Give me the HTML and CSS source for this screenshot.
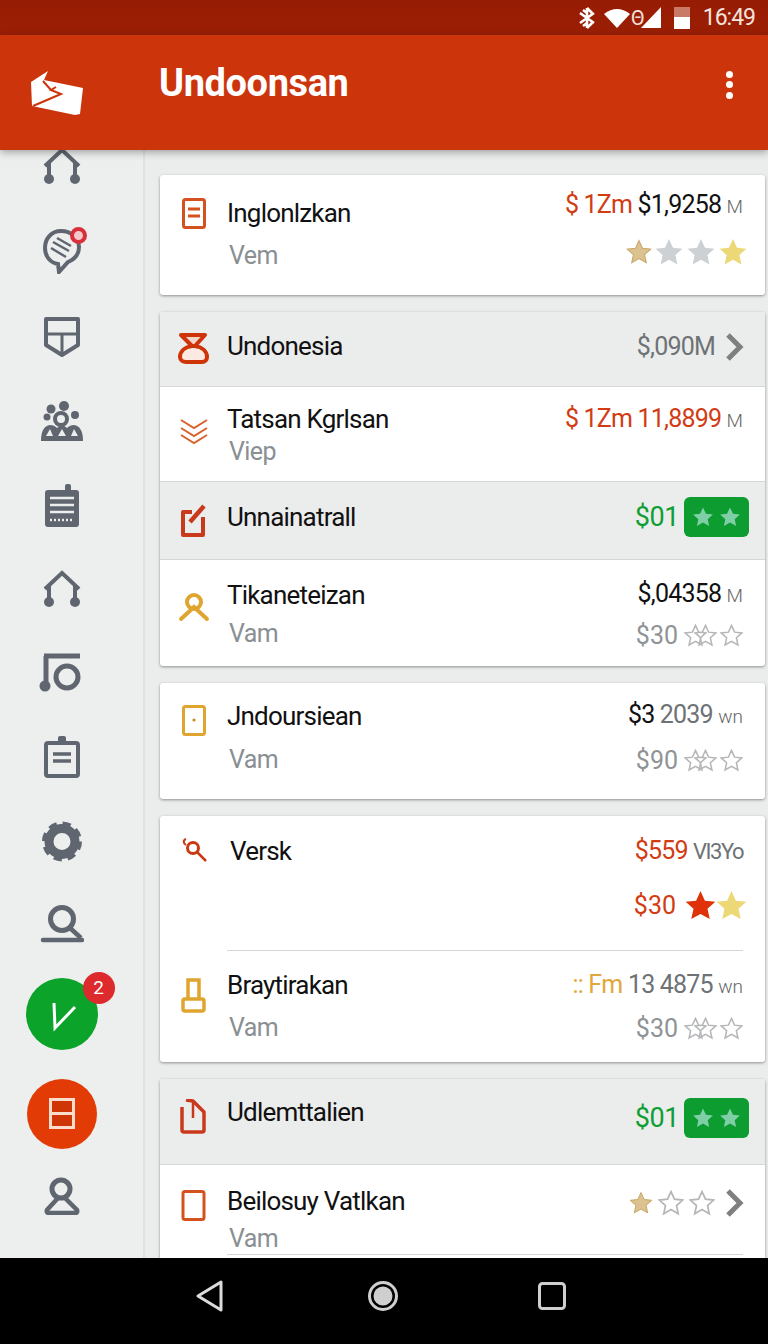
FILE: index.html
```html
<!doctype html>
<html lang="en">
  <head>
    <meta charset="UTF-8" />
    <meta name="viewport" content="width=device-width, initial-scale=1.0" />
    <title>Undoonsan</title>
    <link rel="stylesheet" href="styles.css">
  </head>
  <body>
    <svg class="defs" aria-hidden="true">
      <symbol id="star" viewBox="0 0 24 24">
        <path d="M12 1.5l3.2 7 7.6.8-5.7 5.1 1.6 7.5-6.7-3.8-6.7 3.8 1.6-7.5L1.2 9.3l7.6-.8z" />
      </symbol>
      <symbol id="fork" viewBox="0 0 40 40">
        <path d="M3 19L20 3l17 16M7 16v15M33 16v15" fill="none" stroke="currentColor" stroke-width="4" />
        <circle cx="7" cy="32" r="5" fill="currentColor" />
        <circle cx="33" cy="32" r="5" fill="currentColor" />
      </symbol>
      <symbol id="chevron" viewBox="0 0 20 28">
        <path d="M3 2l12 12L3 26" fill="none" stroke="currentColor" stroke-width="5" />
      </symbol>
    </svg>

    <!-- status bar -->
    <div class="status-bar">
      <svg width="18" height="22" viewBox="0 0 18 22">
        <path d="M9 1v20M2 6l14 10M16 6L2 16M9 1l5 5M9 21l5-5M5 3l4 3M5 19l4-3" fill="none" stroke="#fff" stroke-width="2.6" />
      </svg>
      <svg class="wifi" width="26" height="20" viewBox="0 0 26 20">
        <path d="M0 6Q13-4 26 6L13 20z" fill="#fff" />
      </svg>
      <span class="net">Θ</span>
      <svg class="signal" width="20" height="21" viewBox="0 0 20 21">
        <path d="M20 0v21H0z" fill="#fff" />
      </svg>
      <div class="battery"><div class="battery-level"></div></div>
      <span class="clock">16:49</span>
    </div>

    <!-- app bar -->
    <header class="app-bar">
      <svg class="logo" width="54" height="46" viewBox="0 0 54 46">
        <path d="M1 12L18 1l-4 9 39 8-3 26-5 1L2 36z" fill="#fff" />
        <path d="M3 36l28-12-10-4 5-3M13 11l8 9" fill="none" stroke="#cc340c" stroke-width="2" />
      </svg>
      <h1 class="app-title">Undoonsan</h1>
      <div class="menu-dots"><i></i><i></i><i></i></div>
    </header>

    <div class="content">
      <!-- left rail -->
      <nav class="rail">
        <svg width="40" height="40"><use href="#fork" /></svg>
        <div class="rail-chat">
          <svg width="40" height="47" viewBox="0 0 40 47">
            <path d="M19 4C9 4 3 12 3 21c0 9 6 15 13 16l1 8 9-10c7-3 11-8 11-15C37 11 29 4 19 4z" fill="none" stroke="currentColor" stroke-width="4" />
            <path d="M11 15l16 9M9 21l15 9M15 11l14 8" stroke="currentColor" stroke-width="2.5" />
          </svg>
          <span class="chat-dot"></span>
        </div>
        <svg width="36" height="41" viewBox="0 0 36 41">
          <path d="M2 2h32v26L18 38 2 28z" fill="none" stroke="currentColor" stroke-width="4" stroke-linejoin="round" />
          <path d="M2 17h32M18 17v20" stroke="currentColor" stroke-width="3" />
        </svg>
        <svg width="44" height="40" viewBox="0 0 44 40">
          <circle cx="24" cy="5" r="5" fill="currentColor" />
          <circle cx="11" cy="8" r="4.5" fill="currentColor" />
          <circle cx="35" cy="14" r="4" fill="currentColor" />
          <circle cx="7" cy="16" r="3.5" fill="currentColor" />
          <circle cx="21" cy="18" r="6" fill="none" stroke="currentColor" stroke-width="4" />
          <path d="M1 40c0-10 3-15 9-16 3 0 5 1 7 3 3-3 7-3 10 0 2-2 4-3 7-3 6 1 9 6 9 16z" fill="currentColor" />
          <path d="M6 35l4-7 3 7zM18 35l4-7 4 7zM31 35l3-7 4 7z" fill="#eceded" />
        </svg>
        <svg width="36" height="43" viewBox="0 0 36 43">
          <rect x="1" y="6" width="34" height="37" rx="3" fill="currentColor" />
          <rect x="21" y="0" width="6" height="8" rx="2" fill="currentColor" />
          <path d="M6 14h24M6 21h24M6 28h24" stroke="#eceded" stroke-width="2.5" />
          <path d="M6 36h24" stroke="#eceded" stroke-width="2.5" stroke-dasharray="2 2" />
        </svg>
        <svg width="40" height="40"><use href="#fork" /></svg>
        <svg width="46" height="40" viewBox="0 0 46 40">
          <path d="M5 3h36M7 3v28" fill="none" stroke="currentColor" stroke-width="5" />
          <circle cx="6" cy="33" r="5.5" fill="currentColor" />
          <circle cx="28" cy="24" r="11" fill="none" stroke="currentColor" stroke-width="5" />
        </svg>
        <svg width="36" height="42" viewBox="0 0 36 42">
          <rect x="2" y="7" width="32" height="33" rx="2" fill="none" stroke="currentColor" stroke-width="4" />
          <rect x="14" y="0" width="8" height="8" rx="2" fill="currentColor" />
          <rect x="10" y="5" width="16" height="4" fill="currentColor" />
          <path d="M9 18h18M9 25h18" stroke="currentColor" stroke-width="3.5" />
        </svg>
        <svg width="40" height="41" viewBox="0 0 40 41">
          <circle cx="20" cy="20.5" r="13" fill="none" stroke="currentColor" stroke-width="9" />
          <circle cx="20" cy="20.5" r="17.5" fill="none" stroke="currentColor" stroke-width="5" stroke-dasharray="8 5.75" />
        </svg>
        <svg width="44" height="38" viewBox="0 0 44 38">
          <circle cx="22" cy="14" r="11.5" fill="none" stroke="currentColor" stroke-width="5" />
          <path d="M30 23l11 10" stroke="currentColor" stroke-width="4.5" />
          <path d="M3 35h39" stroke="currentColor" stroke-width="4.5" stroke-linecap="round" />
        </svg>
        <div class="fab fab-green">
          <svg width="40" height="40" viewBox="0 0 40 40">
            <path d="M12 9l1 25L33 13" fill="none" stroke="#fff" stroke-width="3" />
          </svg>
          <span class="fab-badge">2</span>
        </div>
        <div class="fab fab-red">
          <svg width="26" height="32" viewBox="0 0 26 32">
            <rect x="1.5" y="1.5" width="23" height="28" fill="#cf3507" stroke="#fbdccd" stroke-width="3" />
            <path d="M2 15.5h22" stroke="#fbdccd" stroke-width="3" />
          </svg>
        </div>
        <svg class="rail-person" width="36" height="38" viewBox="0 0 36 38">
          <circle cx="17" cy="12" r="9" fill="none" stroke="currentColor" stroke-width="5" />
          <path d="M14 21L3 33q-1 3 2 3h26q3 0 2-3L21 21" fill="none" stroke="currentColor" stroke-width="4.5" />
        </svg>
        <svg width="40" height="40"><use href="#fork" /></svg>
      </nav>

      <!-- list of cards -->
      <main class="list">
        <section class="card">
          <div class="row row-1">
            <div class="glyph">
              <svg width="32" height="32" viewBox="0 0 32 32">
                <rect x="5.5" y="1.5" width="21" height="28" rx="2" fill="none" stroke="#d4521f" stroke-width="3" />
                <path d="M10 11h12M10 18h12" stroke="#d4521f" stroke-width="3" />
              </svg>
            </div>
            <div class="info">
              <div class="title">Inglonlzkan</div>
              <div class="sub">Vem</div>
            </div>
            <div class="vals">
              <div class="amount"><span class="red">$ 1Zm</span> $1,9258 <small>M</small></div>
              <div class="stars stars-big">
                <svg class="star-gold" width="26" height="26"><use href="#star" /></svg>
                <svg class="star-gray" width="30" height="30"><use href="#star" /></svg>
                <svg class="star-gray" width="30" height="30"><use href="#star" /></svg>
                <svg class="star-yellow" width="30" height="30"><use href="#star" /></svg>
              </div>
            </div>
          </div>
        </section>

        <section class="card">
          <div class="row row-alt row-2">
            <div class="glyph">
              <svg width="32" height="32" viewBox="0 0 32 32">
                <path d="M14 13c-7 1-12 5-12 11 0 3 3 5 6 5h16c3 0 5-2 5-5 0-6-5-10-12-11z" fill="#fbe9e2" stroke="#cf3409" stroke-width="4" stroke-linejoin="round" />
                <path d="M3 2h24L17 13h-3z" fill="#f3d5c9" stroke="#cf3409" stroke-width="4" stroke-linejoin="round" />
              </svg>
            </div>
            <div class="info"><div class="title">Undonesia</div></div>
            <div class="vals vals-inline">
              <div class="amount gray">$,090M</div>
              <svg class="chevron" width="20" height="28"><use href="#chevron" /></svg>
            </div>
          </div>
          <div class="row row-3 row-ruled">
            <div class="glyph">
              <svg width="32" height="28" viewBox="0 0 32 28">
                <path d="M3 3l13 8 13-8M3 11l13 8 13-8M3 18l13 8 13-8" fill="none" stroke="#d9622c" stroke-width="2" />
              </svg>
            </div>
            <div class="info">
              <div class="title">Tatsan Kgrlsan</div>
              <div class="sub">Viep</div>
            </div>
            <div class="vals">
              <div class="amount red">$ 1Zm 11,8899 <small>M</small></div>
            </div>
          </div>
          <div class="row row-alt row-4">
            <div class="glyph">
              <svg width="32" height="34" viewBox="0 0 32 34">
                <path d="M14 9H5v23h20V14" fill="none" stroke="#c93a1c" stroke-width="4" stroke-linejoin="round" />
                <path d="M12 19L26 3" stroke="#c93a1c" stroke-width="4.5" />
              </svg>
            </div>
            <div class="info"><div class="title">Unnainatrall</div></div>
            <div class="vals vals-inline">
              <div class="amount green">$01</div>
              <div class="green-badge">
                <svg width="22" height="22"><use href="#star" /></svg>
                <svg width="22" height="22"><use href="#star" /></svg>
              </div>
            </div>
          </div>
          <div class="row row-5">
            <div class="glyph">
              <svg width="32" height="30" viewBox="0 0 32 30">
                <circle cx="16" cy="10" r="7" fill="none" stroke="#e0a52f" stroke-width="4" />
                <path d="M3 27l13-12 13 12" fill="none" stroke="#e0a52f" stroke-width="4" stroke-linecap="round" />
              </svg>
            </div>
            <div class="info">
              <div class="title">Tikaneteizan</div>
              <div class="sub">Vam</div>
            </div>
            <div class="vals">
              <div class="amount">$,04358 <small>M</small></div>
              <div class="stars">
                <span class="muted">$30</span>
                <span class="pair">
                  <svg class="star-line" width="23" height="23"><use href="#star" /></svg>
                  <svg class="star-line" width="23" height="23"><use href="#star" /></svg>
                </span>
                <svg class="star-line" width="23" height="23"><use href="#star" /></svg>
              </div>
            </div>
          </div>
        </section>

        <section class="card">
          <div class="row row-6">
            <div class="glyph">
              <svg width="32" height="31" viewBox="0 0 32 31">
                <rect x="5.5" y="1.5" width="21" height="28" rx="2" fill="none" stroke="#e0a52f" stroke-width="3" />
                <circle cx="16" cy="15" r="1.6" fill="#c98a25" />
              </svg>
            </div>
            <div class="info">
              <div class="title">Jndoursiean</div>
              <div class="sub">Vam</div>
            </div>
            <div class="vals">
              <div class="amount">$3 <span class="dim">2039</span> <small>wn</small></div>
              <div class="stars">
                <span class="muted">$90</span>
                <span class="pair">
                  <svg class="star-line" width="23" height="23"><use href="#star" /></svg>
                  <svg class="star-line" width="23" height="23"><use href="#star" /></svg>
                </span>
                <svg class="star-line" width="23" height="23"><use href="#star" /></svg>
              </div>
            </div>
          </div>
        </section>

        <section class="card">
          <div class="row row-7">
            <div class="glyph">
              <svg width="32" height="28" viewBox="0 0 32 28">
                <circle cx="15" cy="10" r="5.5" fill="none" stroke="#c93a12" stroke-width="3" />
                <path d="M19 14l9 9" stroke="#c93a12" stroke-width="2.5" />
                <path d="M8 7C5 5 5 2 8 1" fill="none" stroke="#c93a12" stroke-width="2" />
              </svg>
            </div>
            <div class="info info-shift"><div class="title">Versk</div></div>
            <div class="vals">
              <div class="amount"><span class="red">$559</span> <span class="dim tight">VI3Yo</span></div>
              <div class="stars stars-big">
                <span class="red">$30</span>
                <svg class="star-red" width="33" height="33"><use href="#star" /></svg>
                <svg class="star-yellow" width="33" height="33"><use href="#star" /></svg>
              </div>
            </div>
          </div>
          <div class="divider"></div>
          <div class="row row-8">
            <div class="glyph">
              <svg width="32" height="36" viewBox="0 0 32 36">
                <path d="M10 20V2h11v18" fill="none" stroke="#e0a52f" stroke-width="3.5" />
                <rect x="5" y="21" width="21" height="12" rx="2" fill="none" stroke="#e0a52f" stroke-width="3.5" />
              </svg>
            </div>
            <div class="info">
              <div class="title">Braytirakan</div>
              <div class="sub">Vam</div>
            </div>
            <div class="vals">
              <div class="amount"><span class="amber">:: Fm</span> <span class="dim">13 4875</span> <small>wn</small></div>
              <div class="stars">
                <span class="muted">$30</span>
                <span class="pair">
                  <svg class="star-line" width="23" height="23"><use href="#star" /></svg>
                  <svg class="star-line" width="23" height="23"><use href="#star" /></svg>
                </span>
                <svg class="star-line" width="23" height="23"><use href="#star" /></svg>
              </div>
            </div>
          </div>
        </section>

        <section class="card">
          <div class="row row-alt row-9">
            <div class="glyph">
              <svg width="32" height="35" viewBox="0 0 32 35">
                <path d="M4 8v23q0 2 2 2h18q2 0 2-2V13L15 2 8 1" fill="none" stroke="#c93a1c" stroke-width="3.5" stroke-linejoin="round" />
                <path d="M15 2v17" stroke="#c93a1c" stroke-width="2.5" />
              </svg>
            </div>
            <div class="info"><div class="title">Udlemttalien</div></div>
            <div class="vals vals-inline">
              <div class="amount green">$01</div>
              <div class="green-badge">
                <svg width="22" height="22"><use href="#star" /></svg>
                <svg width="22" height="22"><use href="#star" /></svg>
              </div>
            </div>
          </div>
          <div class="row row-10">
            <div class="glyph">
              <svg width="32" height="32" viewBox="0 0 32 32">
                <rect x="5" y="1.5" width="21" height="28" rx="2" fill="none" stroke="#d4521f" stroke-width="3" />
              </svg>
            </div>
            <div class="info">
              <div class="title">Beilosuy Vatlkan</div>
              <div class="sub">Vam</div>
            </div>
            <div class="vals vals-inline">
              <svg class="star-gold" width="24" height="24"><use href="#star" /></svg>
              <svg class="star-line" width="26" height="26"><use href="#star" /></svg>
              <svg class="star-line" width="26" height="26"><use href="#star" /></svg>
              <svg class="chevron" width="20" height="28"><use href="#chevron" /></svg>
            </div>
          </div>
          <div class="divider"></div>
          <div class="row-tail"></div>
        </section>
      </main>
    </div>

    <!-- android nav -->
    <footer class="nav-bar">
      <svg width="28" height="32" viewBox="0 0 28 32">
        <path d="M25 2v28L2 16z" fill="none" stroke="#dcdcdc" stroke-width="3" stroke-linejoin="round" />
      </svg>
      <svg class="nav-home" width="32" height="32" viewBox="0 0 32 32">
        <circle cx="16" cy="16" r="13.5" fill="none" stroke="#cfcfcf" stroke-width="3" />
        <circle cx="16" cy="16" r="9.5" fill="#cfcfcf" />
      </svg>
      <svg width="28" height="28" viewBox="0 0 28 28">
        <rect x="1.5" y="1.5" width="25" height="25" rx="3" fill="none" stroke="#cfcfcf" stroke-width="3" />
      </svg>
    </footer>
  </body>
</html>
```

FILE: styles.css
```css
* {
  box-sizing: border-box;
}

body {
  margin: 0;
  width: 768px;
  height: 1344px;
  display: flex;
  flex-direction: column;
  overflow: hidden;
  font-family: Roboto, "Liberation Sans", sans-serif;
  background: #ebecec;
  color: #111;
}

.defs {
  display: none;
}

/* status bar */
.status-bar {
  height: 35px;
  flex: none;
  display: flex;
  align-items: center;
  justify-content: flex-end;
  padding-right: 13px;
  background: linear-gradient(#961c03, #9c1f04);
  color: #f6e4de;
}

.wifi {
  margin-left: 8px;
}

.net {
  font-size: 20px;
  margin-left: 1px;
  color: #f6e4de;
}

.signal {
  margin-left: -4px;
}

.battery {
  width: 16px;
  height: 22px;
  margin-left: 13px;
  background: #c97a66;
  display: flex;
  align-items: flex-end;
}

.battery-level {
  width: 100%;
  height: 12px;
  background: #fff;
}

.clock {
  font-size: 23px;
  letter-spacing: -1px;
  margin-left: 13px;
}

/* app bar */
.app-bar {
  height: 115px;
  flex: none;
  position: relative;
  z-index: 2;
  display: flex;
  align-items: center;
  background: #cc340c;
  box-shadow: 0 2px 8px rgba(0, 0, 0, 0.35);
}

.logo {
  margin-left: 30px;
}

.app-title {
  margin: 0 0 19px 75px;
  flex: 1;
  font-size: 38px;
  font-weight: 700;
  letter-spacing: -0.4px;
  color: #fff;
}

.menu-dots {
  display: flex;
  flex-direction: column;
  gap: 3.5px;
  margin: 0 35px 16px 0;
}

.menu-dots i {
  width: 7px;
  height: 7px;
  border-radius: 50%;
  background: #fff;
}

/* page below the bars */
.content {
  flex: 1;
  min-height: 0;
  display: flex;
  overflow: hidden;
}

.rail {
  width: 145px;
  flex: none;
  display: flex;
  flex-direction: column;
  align-items: center;
  gap: 43px;
  padding: 0 20px 0 0;
  margin-top: -3px;
  background: #edeeee;
  border-right: 2px solid #e0e1e1;
  color: #5f6670;
}

.rail svg {
  flex: none;
}

.rail-chat {
  position: relative;
  height: 47px;
  margin-top: -3px;
}

.chat-dot {
  position: absolute;
  top: 0;
  right: -5px;
  width: 17px;
  height: 17px;
  border-radius: 50%;
  background: #f3c9c9;
  border: 4px solid #d8303a;
}

.fab {
  flex: none;
  position: relative;
  display: flex;
  align-items: center;
  justify-content: center;
  border-radius: 50%;
}

.fab-green {
  width: 72px;
  height: 72px;
  margin-top: -8px;
  background: #0ca32a;
}

.fab-red {
  width: 70px;
  height: 70px;
  margin-top: -14px;
  background: #e23b06;
}

.fab-badge {
  position: absolute;
  top: -6px;
  right: -17px;
  width: 32px;
  height: 32px;
  border-radius: 50%;
  background: #dc2a2d;
  color: #fff;
  font-size: 19px;
  line-height: 32px;
  text-align: center;
}

.rail-person {
  margin-top: -15px;
}

/* cards */
.list {
  flex: 1;
  min-width: 0;
  display: flex;
  flex-direction: column;
  gap: 17px;
  padding: 25px 3px 0 15px;
  overflow: hidden;
}

.card {
  flex: none;
  background: #fff;
  border-radius: 3px;
  box-shadow: 0 1px 3px rgba(0, 0, 0, 0.4);
  overflow: hidden;
}

.row {
  display: flex;
  align-items: flex-start;
  height: var(--h);
}

.row-alt {
  background: #ebecec;
  border-bottom: 1px solid #d6d7d7;
}

.row-ruled {
  border-bottom: 1px solid #d6d7d7;
}

.row-1 { --h: 120px; --glyph: 23px; --title: 23px; --sub: 13px; --val: 15px; --val-gap: 15px; }
.row-2 { --h: 75px; --glyph: 21px; --title: 19px; --val: 20px; }
.row-3 { --h: 95px; --glyph: 30px; --title: 17px; --sub: 3px; --val: 17px; }
.row-4 { --h: 78px; --glyph: 21px; --title: 20px; --val: 15px; }
.row-5 { --h: 106px; --glyph: 32px; --title: 20px; --sub: 9px; --val: 19px; --val-gap: 9px; }
.row-6 { --h: 116px; --glyph: 22px; --title: 18px; --sub: 14px; --val: 17px; --val-gap: 13px; }
.row-7 { --h: 134px; --glyph: 22px; --title: 20px; --val: 20px; --val-gap: 23px; }
.row-8 { --h: 111px; --glyph: 27px; --title: 19px; --sub: 13px; --val: 19px; --val-gap: 11px; }
.row-9 { --h: 86px; --glyph: 20px; --title: 18px; --val: 19px; }
.row-10 { --h: 89px; --glyph: 25px; --title: 21px; --sub: 8px; --val: 24px; }

.row-tail {
  height: 30px;
}

.glyph {
  width: 67px;
  flex: none;
  padding: var(--glyph) 0 0 18px;
}

.glyph svg {
  display: block;
}

.info {
  flex: 1;
  padding-top: var(--title);
}

.info-shift {
  padding-left: 3px;
}

.title {
  font-size: 26px;
  line-height: 30px;
  letter-spacing: -0.8px;
  white-space: nowrap;
}

.sub {
  font-size: 25px;
  line-height: 30px;
  letter-spacing: -0.6px;
  margin-top: var(--sub);
  padding-left: 2px;
  color: #8a8f93;
}

.vals {
  display: flex;
  flex-direction: column;
  align-items: flex-end;
  gap: var(--val-gap);
  padding: var(--val) 22px 0 0;
}

.vals-inline {
  flex-direction: row;
  align-items: center;
  gap: 5px;
  padding-right: 20px;
}

.amount {
  font-size: 25px;
  line-height: 30px;
  letter-spacing: -0.8px;
  white-space: nowrap;
}

.amount small {
  font-size: 19px;
  font-weight: 300;
  letter-spacing: 0;
  color: #666;
}

.red { color: #d23c13; }
.green { color: #0e9f34; font-size: 27px; letter-spacing: -0.4px; }
.amber { color: #e0a83a; }
.gray { color: #6e7275; }
.dim { color: #6e7275; }
.tight { font-size: 22px; letter-spacing: -1.5px; }
.muted { color: #8f9396; }

.stars {
  display: flex;
  align-items: center;
  gap: 3px;
  height: 30px;
  font-size: 25px;
  white-space: nowrap;
}

.stars-big {
  gap: 2px;
  margin-right: -5px;
}

.pair {
  display: flex;
  margin-left: 3px;
}

.pair svg + svg {
  margin-left: -13px;
}

.star-gold { fill: #dcc28f; stroke: #c9a76a; }
.star-gray { fill: #cdd1d4; }
.star-yellow { fill: #ecd877; }
.star-red { fill: #df3208; margin: 0 -4px 0 6px; }
.star-line { fill: none; stroke: #b4b6b8; stroke-width: 1.6; }

.chevron {
  color: #7d7f81;
  margin-left: 5px;
}

.green-badge {
  width: 65px;
  height: 40px;
  margin-right: -4px;
  display: flex;
  align-items: center;
  justify-content: center;
  gap: 5px;
  border-radius: 6px;
  background: #0c9c30;
  fill: #7fcfa6;
}

.divider {
  height: 1px;
  margin: 0 22px 0 67px;
  background: #d4d5d5;
}

/* android nav */
.nav-bar {
  height: 86px;
  flex: none;
  position: relative;
  z-index: 2;
  display: flex;
  align-items: center;
  justify-content: space-between;
  padding: 0 202px 10px 196px;
  background: #000;
}

.nav-home {
  margin-left: 4px;
}
```
